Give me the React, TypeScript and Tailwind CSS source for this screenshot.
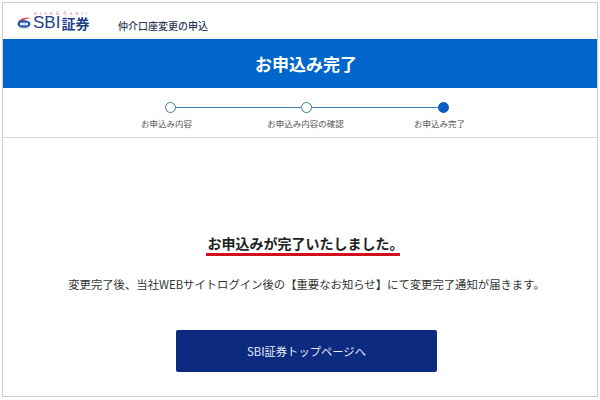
const jp = "font-['Noto_Sans_CJK_JP','Liberation_Sans',sans-serif]";

const steps = [
  { label: "お申込み内容", done: false },
  { label: "お申込み内容の確認", done: false },
  { label: "お申込み完了", done: true },
];

function LogoMark() {
  return (
    <svg width="15" height="12" viewBox="0 0 15 12" className="shrink-0">
      <path d="M1 5 C3 1 9 0 14 1 C10 1.500 6 2.500 4 5 Z" fill="#d8394b" />
      <ellipse cx="7" cy="7" rx="6.500" ry="3.800" fill="#1c4fa8" />
      <rect x="3" y="5.600" width="8" height="2.800" fill="#ffffff" opacity="0.85" />
      <path d="M2 11 H12" stroke="#9aa7c0" strokeWidth="0.800" />
    </svg>
  );
}

function Logo() {
  return (
    <div className="flex w-[76px] flex-col">
      <div className="ml-[17px] h-[4px] text-[4px] leading-[4px] tracking-[3.200px] whitespace-nowrap text-[#d9566a]">
        NISAならSBI!
      </div>
      <div className="mt-[1px] flex h-[14px] items-center gap-[1px]">
        <LogoMark />
        <span className="text-[17px] leading-[14px] font-normal text-[#1f3f86] font-['Liberation_Sans',sans-serif]">
          SBI
        </span>
        <span className="text-[14px] leading-[14px] font-semibold text-[#1f3f86]">証券</span>
      </div>
    </div>
  );
}

function Stepper() {
  return (
    <div className="flex h-[50px] shrink-0 justify-center border-b border-[#d8d8d8] pt-[14px] pl-[13px]">
      <div className="flex w-[284px] flex-col">
        <div className="flex items-center">
          <Dot />
          <div className="h-px flex-1 bg-[#3f7fb5]" />
          <Dot />
          <div className="h-px flex-1 bg-[#3f7fb5]" />
          <Dot active />
        </div>
        <div className="relative mt-[4px] h-[12px] text-[8.500px] leading-[12px] text-[#555555]">
          {steps.map((s, i) => (
            <span
              key={s.label}
              className={
                i === 0
                  ? "absolute left-[2px] -translate-x-1/2 whitespace-nowrap"
                  : i === 1
                    ? "absolute left-[141px] -translate-x-1/2 whitespace-nowrap"
                    : "absolute left-[275px] -translate-x-1/2 whitespace-nowrap"
              }
            >
              {s.label}
            </span>
          ))}
        </div>
      </div>
    </div>
  );
}

function Dot({ active }: { active?: boolean }) {
  return (
    <span
      className={
        active
          ? "h-[11px] w-[11px] shrink-0 rounded-full border border-[#0b5cc4] bg-[#0b5cc4]"
          : "h-[11px] w-[11px] shrink-0 rounded-full border-[1.500px] border-[#3f7f9f] bg-white"
      }
    />
  );
}

export default function App() {
  return (
    <div className={`h-[400px] w-[600px] overflow-hidden bg-white p-[2px] pb-[3px] ${jp}`}>
      <div className="flex h-full flex-col border border-[#cfcfcf]">
        {/* Header */}
        <div className="flex h-[36px] shrink-0 items-start pt-[8px] pl-[14px]">
          <Logo />
          <span className="ml-[25px] mt-[7px] text-[10px] leading-[15px] font-medium text-[#2d3a55]">
            仲介口座変更の申込
          </span>
        </div>

        <div className="flex h-[49px] shrink-0 items-center justify-center bg-[#0066cc] pl-[12px] text-[17px] font-bold text-white">
          お申込み完了
        </div>

        <Stepper />

        {/* Body */}
        <div className="flex flex-1 flex-col items-center pt-[96px]">
          <div className="ml-[5px] w-[194px] border-b-[3px] border-[#d0101c] pl-[2px] text-[14px] leading-[19px] font-bold whitespace-nowrap text-[#222222]">
            お申込みが完了いたしました。
          </div>
          <p className="mt-[20px] ml-[13px] text-[11.350px] leading-[16px] whitespace-nowrap text-[#333333]">
            変更完了後、当社WEBサイトログイン後の【重要なお知らせ】にて変更完了通知が届きます。
          </p>
          <button className="mt-[38px] ml-[13px] flex h-[42px] w-[261px] items-center justify-center rounded-[2px] bg-[#0b2a80] text-[11.300px] text-[#e8ecf6]">
            SBI証券トップページへ
          </button>
        </div>
      </div>
    </div>
  );
}
